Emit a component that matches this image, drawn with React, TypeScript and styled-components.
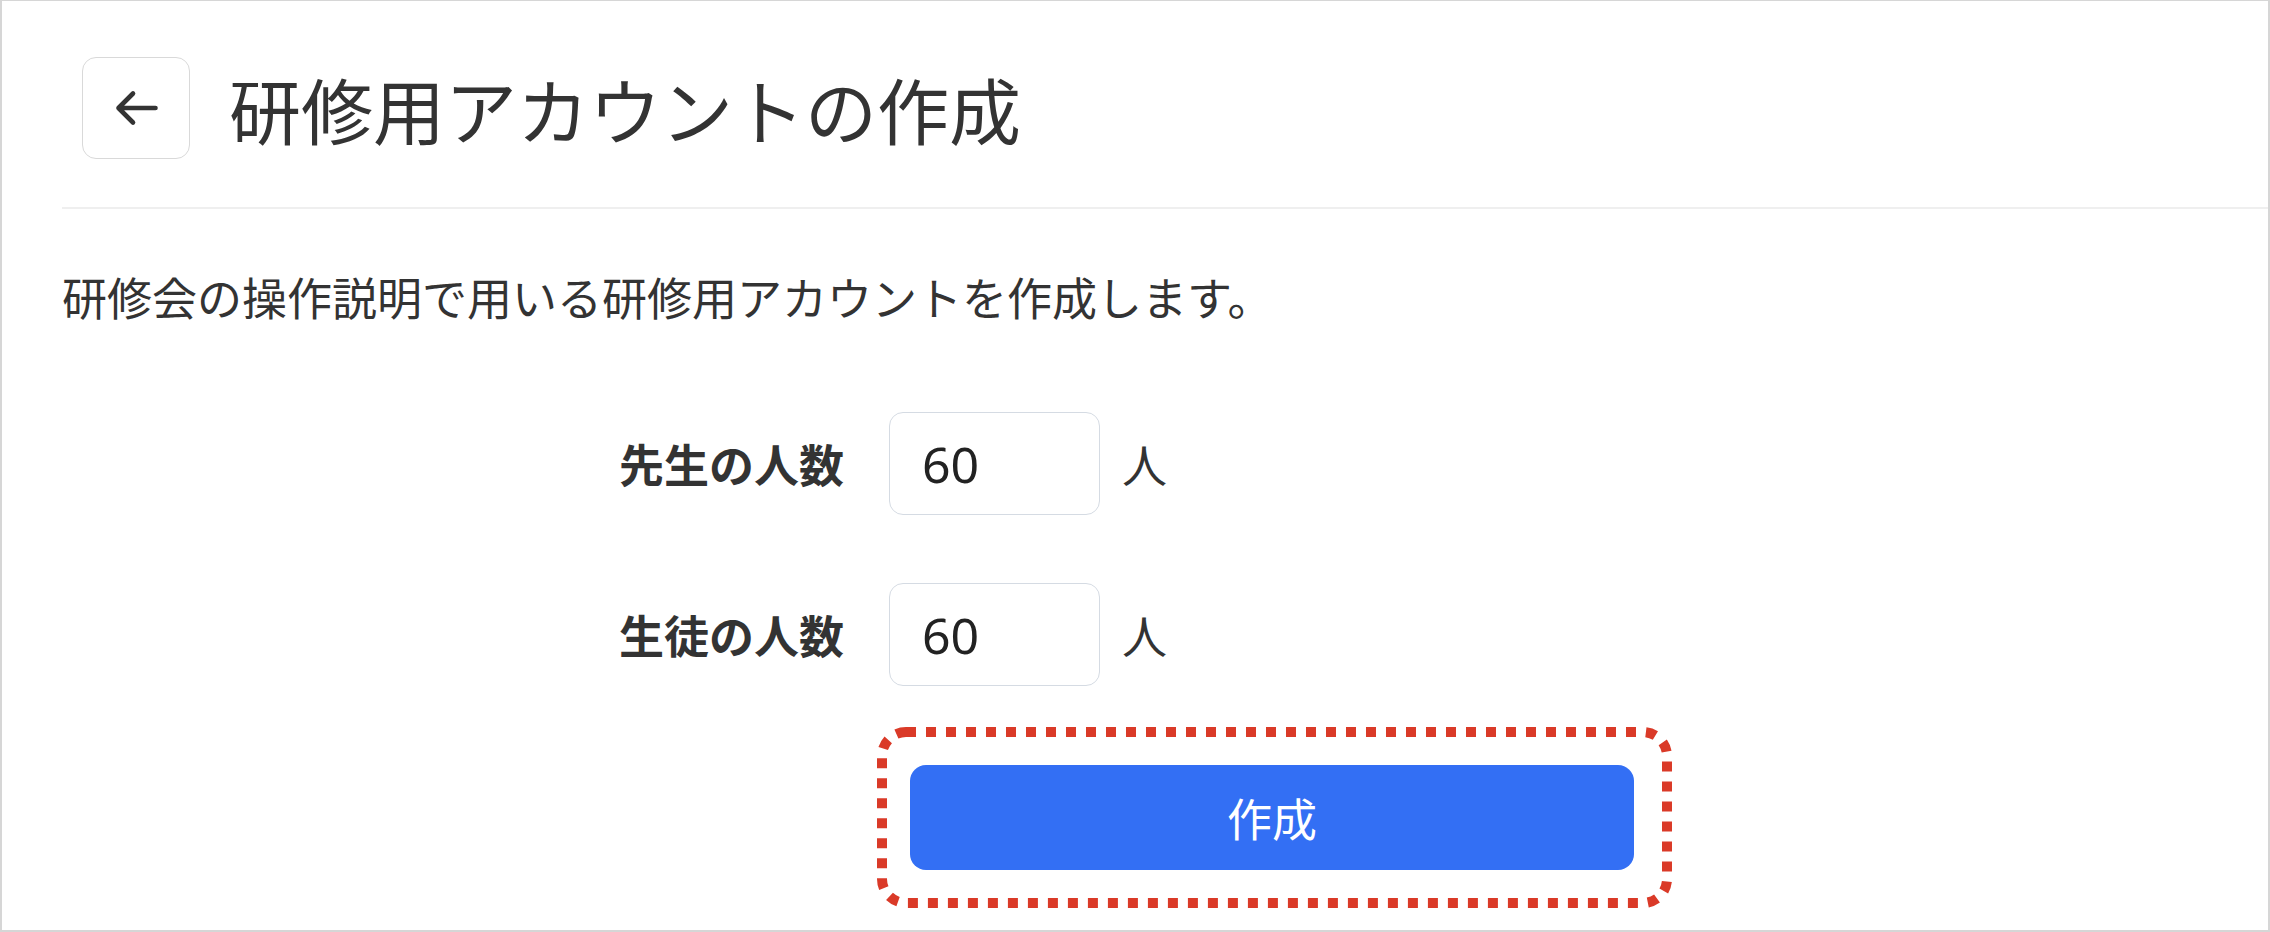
import React from "react";
import styled, { createGlobalStyle } from "styled-components";

const GlobalStyle = createGlobalStyle`
  html, body {
    margin: 0;
    padding: 0;
    background: #ffffff;
    font-family: "Noto Sans CJK JP", "Noto Sans", sans-serif;
    color: #333333;
  }
  * { box-sizing: border-box; }
`;

const Frame = styled.div`
  width: 2270px;
  height: 932px;
  border: 2px solid #d6d6d6;
  border-top-width: 1px;
  overflow: hidden;
  background: #ffffff;
`;

const Content = styled.main`
  padding-left: 60px;
`;

const Header = styled.header`
  display: flex;
  align-items: center;
  gap: 39px;
  padding: 56px 0 48px 20px;
  border-bottom: 2px solid #efefef;
`;

const BackButton = styled.button`
  width: 108px;
  height: 102px;
  display: flex;
  align-items: center;
  justify-content: center;
  background: #ffffff;
  border: 1.5px solid #d9d9d9;
  border-radius: 14px;
  padding: 0;
  cursor: pointer;
`;

const Title = styled.h1`
  margin: 0;
  font-size: 72px;
  line-height: 1;
  font-weight: 400;
  color: #333333;
  letter-spacing: 0;
`;

const Description = styled.p`
  margin: 55px 0 0;
  font-size: 45px;
  line-height: 66px;
  color: #333333;
`;

const Form = styled.form`
  display: flex;
  flex-direction: column;
  gap: 68px;
  margin-top: 82px;
  padding-left: 557px;
`;

const Row = styled.div`
  display: flex;
  align-items: center;
`;

const Label = styled.label`
  width: 225px;
  margin-right: 45px;
  text-align: right;
  font-size: 45px;
  font-weight: 700;
  color: #333333;
  white-space: nowrap;
`;

const NumberInput = styled.input`
  width: 211px;
  height: 103px;
  border: 1.5px solid #d5dbe3;
  border-radius: 14px;
  padding: 0 0 0 32px;
  font-family: "Noto Sans", "Noto Sans CJK JP", sans-serif;
  font-size: 50px;
  color: #222222;
  background: #ffffff;
  outline: none;
`;

const Unit = styled.span`
  margin-left: 22px;
  font-size: 45px;
  color: #333333;
`;

const ButtonArea = styled.div`
  position: relative;
  width: 795px;
  margin-top: -27px;
  margin-left: 258px;
  padding: 38px 38px 38px 33px;
`;

const Highlight = styled.svg`
  position: absolute;
  inset: 0;
  pointer-events: none;
`;

const SubmitButton = styled.button`
  display: flex;
  align-items: center;
  justify-content: center;
  width: 724px;
  height: 105px;
  border: none;
  border-radius: 16px;
  background: #336ff4;
  color: #ffffff;
  font-family: "Noto Sans CJK JP", sans-serif;
  font-size: 45px;
  font-weight: 400;
  cursor: pointer;
`;

const ArrowLeftIcon = () => (
  <svg width="44" height="40" viewBox="0 0 44 40" fill="none">
    <path
      d="M4.5 20H41.5M4.5 20L19 5.5M4.5 20L19 34.5"
      stroke="#333333"
      strokeWidth="4.6"
      strokeLinecap="round"
      strokeLinejoin="round"
    />
  </svg>
);

const rows = [
  { label: "先生の人数", value: "60" },
  { label: "生徒の人数", value: "60" },
];

export default function App() {
  return (
    <>
      <GlobalStyle />
      <Frame>
        <Content>
          <Header>
            <BackButton aria-label="戻る">
              <ArrowLeftIcon />
            </BackButton>
            <Title>研修用アカウントの作成</Title>
          </Header>
          <Description>
            研修会の操作説明で用いる研修用アカウントを作成します。
          </Description>
          <Form onSubmit={(e) => e.preventDefault()}>
            {rows.map((r) => (
              <Row key={r.label}>
                <Label>{r.label}</Label>
                <NumberInput type="text" value={r.value} readOnly />
                <Unit>人</Unit>
              </Row>
            ))}
            <ButtonArea>
              <Highlight width="795" height="181" viewBox="0 0 795 181">
                <rect
                  x="5"
                  y="5"
                  width="785"
                  height="171"
                  rx="24"
                  fill="none"
                  stroke="#da3a28"
                  strokeWidth="10"
                  strokeDasharray="10 10"
                />
              </Highlight>
              <SubmitButton type="submit">作成</SubmitButton>
            </ButtonArea>
          </Form>
        </Content>
      </Frame>
    </>
  );
}
